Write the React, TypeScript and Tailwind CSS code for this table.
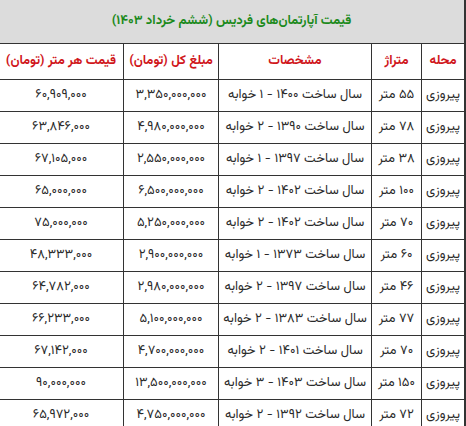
import React from "react";

const rows: [string, string, string, string, string][] = [
  ["پیروزی", "۵۵ متر", "سال ساخت ۱۴۰۰ - ۱ خوابه", "۳,۳۵۰,۰۰۰,۰۰۰", "۶۰,۹۰۹,۰۰۰"],
  ["پیروزی", "۷۸ متر", "سال ساخت ۱۳۹۰ - ۲ خوابه", "۴,۹۸۰,۰۰۰,۰۰۰", "۶۳,۸۴۶,۰۰۰"],
  ["پیروزی", "۳۸ متر", "سال ساخت ۱۳۹۷ - ۱ خوابه", "۲,۵۵۰,۰۰۰,۰۰۰", "۶۷,۱۰۵,۰۰۰"],
  ["پیروزی", "۱۰۰ متر", "سال ساخت ۱۴۰۲ - ۲ خوابه", "۶,۵۰۰,۰۰۰,۰۰۰", "۶۵,۰۰۰,۰۰۰"],
  ["پیروزی", "۷۰ متر", "سال ساخت ۱۴۰۲ - ۲ خوابه", "۵,۲۵۰,۰۰۰,۰۰۰", "۷۵,۰۰۰,۰۰۰"],
  ["پیروزی", "۶۰ متر", "سال ساخت ۱۳۷۳ - ۱ خوابه", "۲,۹۰۰,۰۰۰,۰۰۰", "۴۸,۳۳۳,۰۰۰"],
  ["پیروزی", "۴۶ متر", "سال ساخت ۱۳۹۷ - ۲ خوابه", "۲,۹۸۰,۰۰۰,۰۰۰", "۶۴,۷۸۲,۰۰۰"],
  ["پیروزی", "۷۷ متر", "سال ساخت ۱۳۸۳ - ۲ خوابه", "۵,۱۰۰,۰۰۰,۰۰۰", "۶۶,۲۳۳,۰۰۰"],
  ["پیروزی", "۷۰ متر", "سال ساخت ۱۴۰۱ - ۲ خوابه", "۴,۷۰۰,۰۰۰,۰۰۰", "۶۷,۱۴۲,۰۰۰"],
  ["پیروزی", "۱۵۰ متر", "سال ساخت ۱۴۰۳ - ۳ خوابه", "۱۳,۵۰۰,۰۰۰,۰۰۰", "۹۰,۰۰۰,۰۰۰"],
  ["پیروزی", "۷۲ متر", "سال ساخت ۱۳۹۲ - ۲ خوابه", "۴,۷۵۰,۰۰۰,۰۰۰", "۶۵,۹۷۲,۰۰۰"],
];

const headers = ["محله", "متراژ", "مشخصات", "مبلغ کل (تومان)", "قیمت هر متر (تومان)"];

export default function App() {
  return (
    <div
      className="w-[466px] h-[426px] overflow-hidden bg-white"
      style={{ fontFamily: '"Vazirmatn", "Noto Sans Arabic", "Noto Naskh Arabic", "Noto Sans", "DejaVu Sans", sans-serif' }}
    >
      <div dir="rtl" className="w-[467px] -ml-[1px] border-r-2 border-[#333]">
        <div className="h-[44px] bg-[#dcdcdc] flex items-center justify-center border-b border-[#333] text-[#1b8a1b] font-bold text-[13px] whitespace-nowrap">
          قیمت آپارتمان‌های فردیس (ششم خرداد ۱۴۰۳)
        </div>
        <div className="grid grid-cols-[43px_50px_153px_95px_1fr]">
          {headers.map((h, i) => (
            <div
              key={i}
              className={`h-[36px] flex items-center justify-center text-[#d0161b] font-bold text-[13px] whitespace-nowrap border-b border-[#333] ${i < 4 ? "border-l" : ""}`}
            >
              {h}
            </div>
          ))}
          {rows.map((r, ri) =>
            r.map((c, ci) => (
              <div
                key={`${ri}-${ci}`}
                className={`h-[32px] flex items-center justify-center text-[#2a2a2a] text-[13px] whitespace-nowrap border-b border-[#333] ${ci < 4 ? "border-l" : ""}`}
              >
                {c}
              </div>
            ))
          )}
        </div>
      </div>
    </div>
  );
}
